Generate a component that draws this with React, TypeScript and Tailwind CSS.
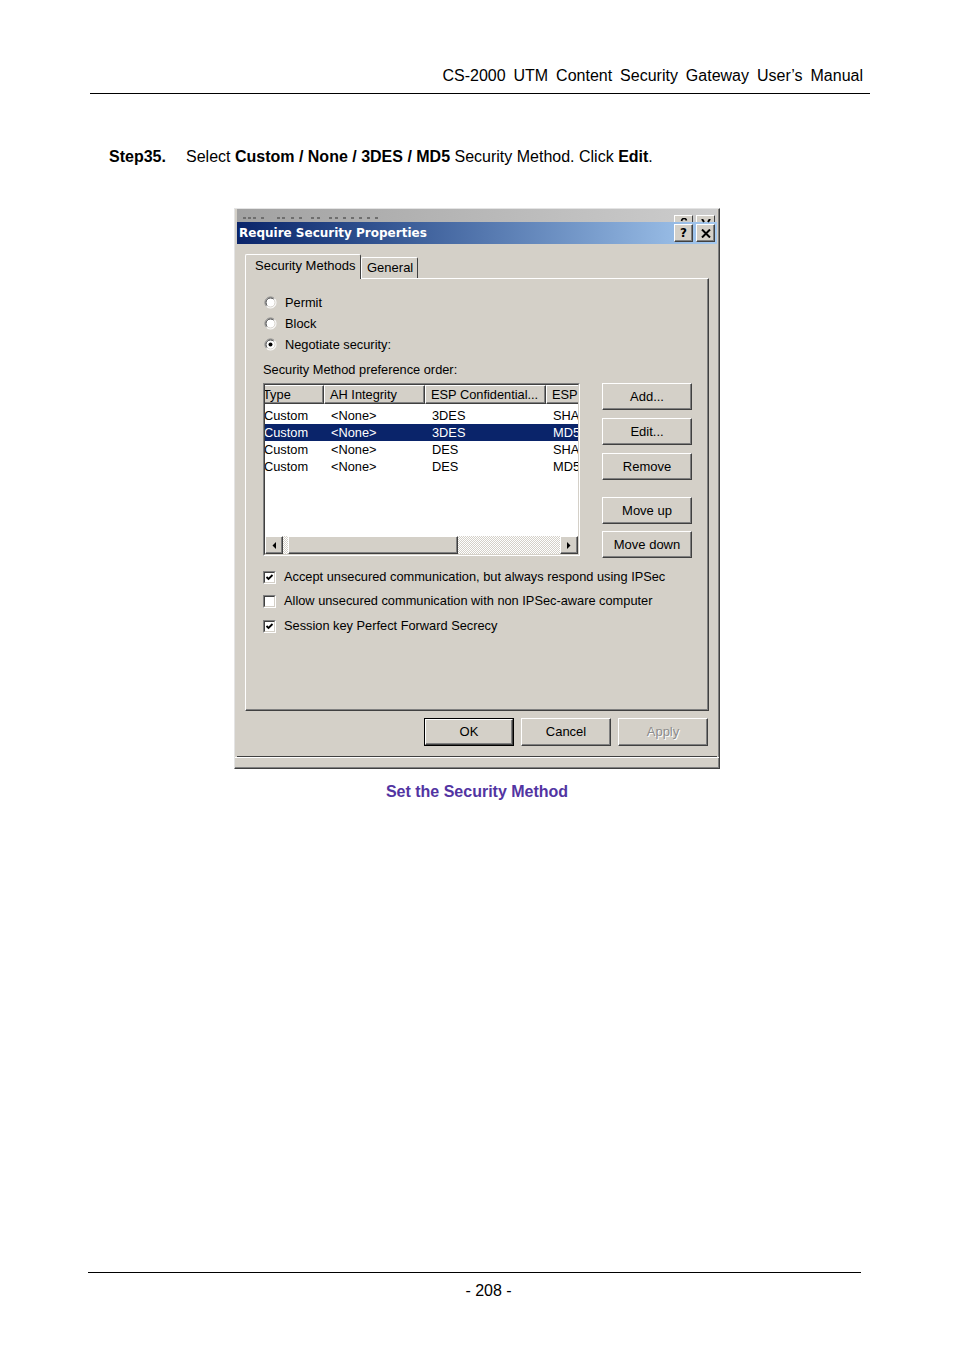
import React from 'react';

const raised =
  'border border-t-white border-l-white border-r-[#404040] border-b-[#404040] shadow-[inset_-1px_-1px_0_#808080]';

function Button({
  label,
  className,
  disabled,
}: {
  label: string;
  className: string;
  disabled?: boolean;
}) {
  return (
    <div className={`${raised} bg-[#d4d0c8] flex items-center justify-center text-[13px] ${className}`}>
      <span className={disabled ? 'text-[#8c8c8c] [text-shadow:1px_1px_0_#ffffff]' : 'text-black'}>{label}</span>
    </div>
  );
}

function Radio({ checked, label }: { checked?: boolean; label: string }) {
  return (
    <div className="h-[21px] flex items-center gap-[8px] ml-[1px]">
      <svg width="13" height="13" viewBox="0 0 13 13">
        <circle cx="6.5" cy="6.5" r="5.5" fill="#ffffff" />
        <path d="M10.4 2.6 A5.5 5.5 0 0 0 2.6 10.4" fill="none" stroke="#808080" />
        <path d="M2.6 10.4 A5.5 5.5 0 0 0 10.4 2.6" fill="none" stroke="#ffffff" />
        <path d="M9.7 3.3 A4.5 4.5 0 0 0 3.3 9.7" fill="none" stroke="#404040" />
        <path d="M3.3 9.7 A4.5 4.5 0 0 0 9.7 3.3" fill="none" stroke="#d4d0c8" />
        {checked && <circle cx="6.5" cy="6.5" r="2" fill="#000000" />}
      </svg>
      <span>{label}</span>
    </div>
  );
}

function Check({ checked, label, className }: { checked?: boolean; label: string; className: string }) {
  return (
    <div className={`h-[20px] flex items-center gap-[8px] ${className}`}>
      <div className="w-[13px] h-[13px] border border-t-[#808080] border-l-[#808080] border-r-white border-b-white">
        <div className="w-full h-full bg-white border border-t-[#404040] border-l-[#404040] border-r-[#d4d0c8] border-b-[#d4d0c8]">
          {checked && (
            <svg width="9" height="9" viewBox="0 0 9 9">
              <polyline points="1.5,4 3.5,6 7.5,2" fill="none" stroke="#000000" strokeWidth="1.8" />
            </svg>
          )}
        </div>
      </div>
      <span>{label}</span>
    </div>
  );
}

const cols = ['w-[67px]', 'w-[101px]', 'w-[121px]', 'w-[80px]'];

const rows = [
  ['Custom', '<None>', '3DES', 'SHA'],
  ['Custom', '<None>', '3DES', 'MD5'],
  ['Custom', '<None>', 'DES', 'SHA'],
  ['Custom', '<None>', 'DES', 'MD5'],
];

function ListView() {
  return (
    <div className="w-[317px] h-[173px] border border-t-[#808080] border-l-[#808080] border-r-white border-b-white">
      <div className="w-full h-full bg-white border border-t-[#404040] border-l-[#404040] border-r-[#d4d0c8] border-b-[#d4d0c8] flex flex-col overflow-hidden">
        <div className="h-[19px] flex ml-[-8px] shrink-0">
          {['Type', 'AH Integrity', 'ESP Confidential...', 'ESP'].map((h, i) => (
            <div key={h} className={`${cols[i]} shrink-0 ${raised} bg-[#d4d0c8] flex items-center pl-[5px] whitespace-nowrap`}>
              {h}
            </div>
          ))}
        </div>
        <div className="flex-1 pt-[3px]">
          {rows.map((r, ri) => (
            <div
              key={ri}
              className={`h-[17px] flex ml-[-8px] ${ri === 1 ? 'bg-[#0a246a] text-white' : 'text-black'}`}
            >
              {r.map((c, ci) => (
                <div key={ci} className={`${cols[ci]} shrink-0 flex items-center pl-[7px] whitespace-nowrap`}>
                  {c}
                </div>
              ))}
            </div>
          ))}
        </div>
        <div className="h-[18px] flex shrink-0">
          <div className={`w-[18px] h-[18px] ${raised} bg-[#d4d0c8] flex items-center justify-center`}>
            <svg width="4" height="7" viewBox="0 0 4 7">
              <polygon points="4,0 4,7 0.5,3.5" fill="#000000" />
            </svg>
          </div>
          <div className="w-[5px] bg-[repeating-conic-gradient(#d4d0c8_0%_25%,#ffffff_0%_50%)] bg-[length:2px_2px]" />
          <div className={`w-[170px] ${raised} bg-[#d4d0c8]`} />
          <div className="flex-1 bg-[repeating-conic-gradient(#d4d0c8_0%_25%,#ffffff_0%_50%)] bg-[length:2px_2px]" />
          <div className={`w-[18px] h-[18px] ${raised} bg-[#d4d0c8] flex items-center justify-center`}>
            <svg width="4" height="7" viewBox="0 0 4 7">
              <polygon points="0,0 0,7 3.5,3.5" fill="#000000" />
            </svg>
          </div>
        </div>
      </div>
    </div>
  );
}

function TitleButton({ kind }: { kind: 'help' | 'close' }) {
  return (
    <div className={`w-[19px] h-[18px] ${raised} bg-[#d4d0c8] flex items-center justify-center`}>
      {kind === 'help' ? (
        <span className="font-['DejaVu_Sans',sans-serif] font-bold text-[12px] leading-none text-black">?</span>
      ) : (
        <svg width="10" height="9" viewBox="0 0 10 9">
          <path d="M1 0.5 L9 8.5 M9 0.5 L1 8.5" stroke="#000000" strokeWidth="2" />
        </svg>
      )}
    </div>
  );
}

// the covered title bar of the window behind: only the tops of its letters and buttons peek out
function BehindStrip() {
  const marks = [4, 9, 14, 22, 38, 43, 52, 60, 72, 78, 90, 96, 104, 112, 120, 128, 136];
  return (
    <div className="h-[13px] mx-[2px] flex items-end bg-gradient-to-r from-[#a2a2a2] to-[#cdcdcd]">
      <svg width="150" height="4" viewBox="0 0 150 4" className="ml-[2px] mb-[1px]">
        {marks.map((x) => (
          <rect key={x} x={x} y="0" width="3" height="2" fill="#6e6e6e" />
        ))}
      </svg>
      <div className="flex-1" />
      <div className="flex gap-[3px] mr-[2px]">
        <div className="w-[19px] h-[7px] bg-[#d4d0c8] border-t border-l border-r border-t-white border-l-white border-r-[#404040] flex justify-center">
          <svg width="8" height="4" viewBox="0 0 8 4" className="mt-[2px]">
            <path d="M1.5 3 Q2 0.5 4 0.5 Q6 0.5 6.5 2.5" fill="none" stroke="#000000" strokeWidth="1.6" />
          </svg>
        </div>
        <div className="w-[19px] h-[7px] bg-[#d4d0c8] border-t border-l border-r border-t-white border-l-white border-r-[#404040] flex justify-center">
          <svg width="10" height="4" viewBox="0 0 10 4" className="mt-[3px]">
            <path d="M1 0 L3 3 M9 0 L7 3" stroke="#000000" strokeWidth="2" />
          </svg>
        </div>
      </div>
    </div>
  );
}

function Dialog() {
  return (
    <div className="w-[486px] bg-[#d4d0c8] border border-t-[#e4e4e4] border-l-[#e4e4e4] border-r-[#404040] border-b-[#404040] shadow-[inset_-1px_-1px_0_#808080] font-['Liberation_Sans',Arial,sans-serif] text-[13px] text-black">
      <BehindStrip />
      <div className="mx-[2px] border-b border-b-[#404040]">
        <div className="h-[22px] flex items-center bg-gradient-to-r from-[#0a246a] to-[#a6caf0]">
          <span className="flex-1 pl-[2px] font-['DejaVu_Sans',sans-serif] font-bold text-[12px] text-white whitespace-nowrap">
            Require Security Properties
          </span>
          <div className="flex gap-[3px] mr-[2px]">
            <TitleButton kind="help" />
            <TitleButton kind="close" />
          </div>
        </div>
        <div className="px-[8px] pt-[10px] pb-[10px]">
          <div className="flex items-end h-[24px]">
            <div className="relative z-10 w-[116px] h-[25px] -mb-px bg-[#d4d0c8] border-t border-l border-r border-t-white border-l-white border-r-[#404040] rounded-t-[2px] pl-[9px] pt-[3px] leading-[16px]">
              Security Methods
            </div>
            <div className="w-[57px] h-[21px] bg-[#d4d0c8] border-t border-l border-r border-t-white border-l-white border-r-[#404040] rounded-t-[2px] pl-[5px] pt-[2px] leading-[16px]">
              General
            </div>
          </div>
          <div className={`w-[464px] h-[433px] ${raised} bg-[#d4d0c8] pl-[17px] pt-[13px] text-[12.8px]`}>
            <Radio label="Permit" />
            <Radio label="Block" />
            <Radio label="Negotiate security:" checked />
            <div className="h-[18px] mt-[6px] flex items-center">Security Method preference order:</div>
            <div className="mt-[4px] flex">
              <ListView />
              <div className="ml-[22px] flex flex-col">
                <Button label="Add..." className="w-[90px] h-[27px]" />
                <Button label="Edit..." className="w-[90px] h-[27px] mt-[8px]" />
                <Button label="Remove" className="w-[90px] h-[27px] mt-[8px]" />
                <Button label="Move up" className="w-[90px] h-[27px] mt-[17px]" />
                <Button label="Move down" className="w-[90px] h-[27px] mt-[7px]" />
              </div>
            </div>
            <Check checked label="Accept unsecured communication, but always respond using IPSec" className="mt-[9px]" />
            <Check label="Allow unsecured communication with non IPSec-aware computer" className="mt-[4px]" />
            <Check checked label="Session key Perfect Forward Secrecy" className="mt-[5px]" />
          </div>
          <div className="mt-[7px] flex justify-end gap-[7px] mr-[1px]">
            <div className="w-[90px] h-[28px] border border-black">
              <Button label="OK" className="w-full h-full" />
            </div>
            <Button label="Cancel" className="w-[90px] h-[28px]" />
            <Button label="Apply" className="w-[90px] h-[28px]" disabled />
          </div>
        </div>
      </div>
      <div className="h-[11px] border-t border-t-white" />
    </div>
  );
}

export default function App() {
  return (
    <div className="w-[954px] h-[1350px] bg-white flex flex-col font-['Liberation_Sans',Arial,sans-serif] text-black">
      <div className="ml-[90px] w-[780px] pt-[67px] pb-[8px] pr-[7px] border-b border-b-black text-right text-[16px] leading-[18px] [word-spacing:3.5px]">
        CS-2000 UTM Content Security Gateway User’s Manual
      </div>
      <div className="mt-[54px] ml-[109px] text-[16px] leading-[18px] flex">
        <span className="w-[77px] font-bold">Step35.</span>
        <span>
          Select <b>Custom / None / 3DES / MD5</b> Security Method. Click <b>Edit</b>.
        </span>
      </div>
      <div className="mt-[42px] ml-[234px]">
        <Dialog />
      </div>
      <div className="mt-[14px] text-center text-[16px] leading-[18px] font-bold text-[#5234a2]">
        Set the Security Method
      </div>
      <div className="flex-1" />
      <div className="ml-[88px] w-[773px] border-t border-t-black pt-[9px] pb-[50px] pl-[28px] text-center text-[16px] leading-[18px]">
        - 208 -
      </div>
    </div>
  );
}
